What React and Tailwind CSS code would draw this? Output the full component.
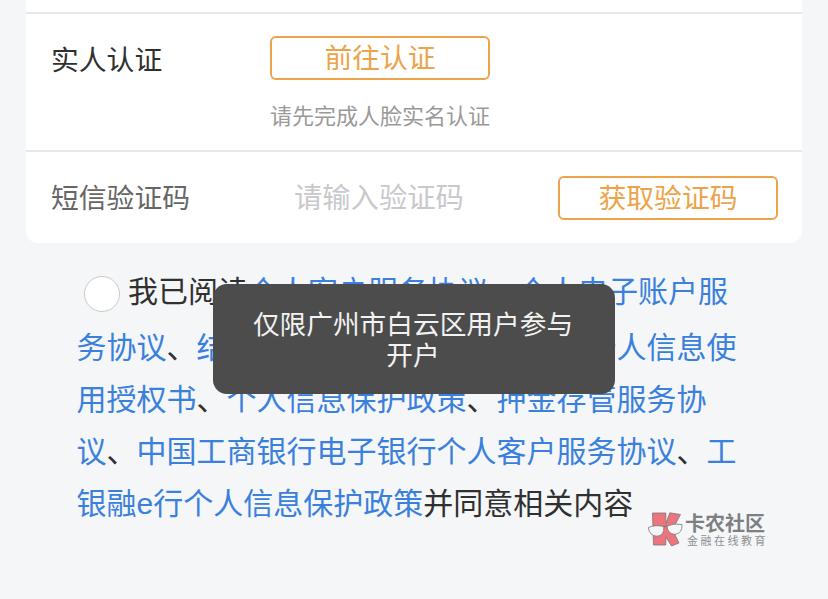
function Link({ children }) {
  return <span className="text-[#3a80dc]">{children}</span>;
}

function OutlineButton({ children }) {
  return (
    <button className="flex h-11 w-[220px] items-center justify-center rounded-md border-2 border-[#eda349] pb-0.5 text-[27.8px] leading-none text-[#eda349]">
      {children}
    </button>
  );
}

function Agreement() {
  return (
    <div className="pl-[76.5px] pt-5 text-[30px] leading-[52px] whitespace-nowrap text-[#303030]">
      <div className="flex h-[56px] items-start pl-[7.5px]">
        <span className="mt-[13px] mr-2 size-9 shrink-0 rounded-full border border-[#c9c9c9] bg-white" />
        <p>
          我已阅读<Link>个人客户服务协议</Link>、<Link>个人电子账户服</Link>
        </p>
      </div>
      <p>
        <Link>务协议</Link>、<Link>结算账户管理协议</Link>、<Link>工商银行个人信息使</Link>
      </p>
      <p>
        <Link>用授权书</Link>、<Link>个人信息保护政策</Link>、<Link>押金存管服务协</Link>
      </p>
      <p>
        <Link>议</Link>、<Link>中国工商银行电子银行个人客户服务协议</Link>、<Link>工</Link>
      </p>
      <p>
        <Link>
          银融<span className="font-['Liberation_Sans',sans-serif]">e</span>行个人信息保护政策
        </Link>
        并同意相关内容
      </p>
    </div>
  );
}

function Watermark() {
  return (
    <div className="absolute left-[647px] top-[510px] flex items-start text-[#7d7f82]">
      <svg width="37" height="38" viewBox="0 0 37 38" stroke="#77797c" strokeWidth="0.8" strokeLinejoin="round">
        <path d="M5.500 3 H18.800 V13.500 L22.800 2.800 L33.500 4.500 L25.500 19.500 L32 33 L24.500 36 L18.800 27 V35 H6.500 Z" fill="#eb747d" />
        <path d="M1.300 17.500 Q8 14.500 16.800 16.500 Q17.500 25.800 10 26.200 Q2.500 26 1.300 17.500 Z" fill="#f5f6f8" />
        <path d="M20 16 Q27 13 35 14.500 Q35.500 23.500 28 24.300 Q21 24.500 20 16 Z" fill="#f5f6f8" />
        <path d="M16.800 17 Q18.300 15.600 20 16.500" fill="none" strokeWidth="1.2" />
      </svg>
      <div className="ml-px mt-[2px] whitespace-nowrap">
        <div className="text-[20px] font-bold leading-[22px]">卡农社区</div>
        <div className="ml-0.5 text-[11px] leading-[12px] tracking-[2.5px] text-[#8d8f92]">金融在线教育</div>
      </div>
    </div>
  );
}

export default function App() {
  return (
    <main className="relative h-[599px] w-[828px] overflow-hidden bg-[#f4f6f8] font-['Noto_Sans_CJK_SC',sans-serif]">
      <section className="mx-[26px] h-[243px] rounded-b-xl bg-white">
        <div className="h-[14px] border-b-2 border-[#e8e8e9]" />
        <div className="flex h-[138px] items-start border-b-2 border-[#e8e8e9] pl-[25px]">
          <div className="mt-[30px] w-[219px] text-[27.8px] leading-7 text-[#303030]">实人认证</div>
          <div className="pt-[22px]">
            <OutlineButton>前往认证</OutlineButton>
            <p className="mt-[22px] text-[22px] leading-6 text-[#999]">请先完成人脸实名认证</p>
          </div>
        </div>
        <div className="flex h-[91px] items-start pl-[25px] pr-6">
          <div className="mt-[30px] w-[243px] text-[27.8px] leading-7 text-[#666]">短信验证码</div>
          <div className="mt-[30px] flex-1 text-[28.3px] leading-7 text-[#c8c9cc]">请输入验证码</div>
          <div className="pt-6">
            <OutlineButton>获取验证码</OutlineButton>
          </div>
        </div>
      </section>
      <Agreement />
      <div className="absolute left-[213px] top-[284px] flex h-[110px] w-[402px] flex-col items-center justify-center rounded-[14px] bg-[#4c4c4c] pb-0.5 pr-0.5 text-[26.7px] leading-[31px] text-[#f2f2f2]">
        <span>仅限广州市白云区用户参与</span>
        <span>开户</span>
      </div>
      <Watermark />
    </main>
  );
}
